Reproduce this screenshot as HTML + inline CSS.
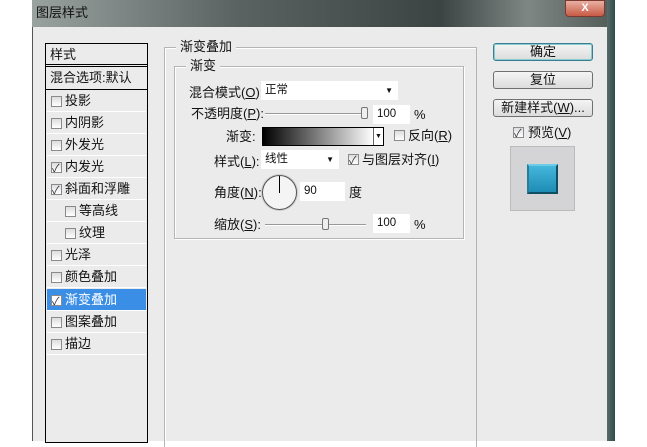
<!DOCTYPE html>
<html><head><meta charset="utf-8"><style>
*{margin:0;padding:0;box-sizing:border-box}
body{width:647px;height:441px;background:#fff;position:relative;overflow:hidden;font-family:"Liberation Sans","Noto Sans CJK SC",sans-serif;font-size:13px;color:#111}
.a{position:absolute}
.t{position:absolute;white-space:nowrap;line-height:14px}
.cb{position:absolute;width:11px;height:11px;border:1px solid #8a8a8a;background:linear-gradient(#ddd,#fff)}
.cb.on::after{content:"✓";position:absolute;left:0px;top:-3px;font-size:11px;color:#334}
.it{position:absolute;left:47px;width:99px;height:22px;border-bottom:1px solid #fff}
.btn{position:absolute;left:493px;width:100px;height:18px;border:1px solid #707070;border-radius:3px;background:linear-gradient(#f4f4f4,#dcdcdc);text-align:center;line-height:16px}
.inp{position:absolute;background:#fff;height:19px;line-height:19px;padding-left:4px;font-size:11.5px}
</style></head><body>
<div class="a" style="left:32px;top:0;width:583px;height:441px;background:#ecebec;border-left:1px solid #555"></div>
<div class="a" style="left:32px;top:0;width:583px;height:27px;background:linear-gradient(90deg,#9aa2a0,#5a6361 35%,#3b4442 70%,#7f8785 85%,#525a58)"></div>
<div class="t" style="left:36px;top:6px;color:#111;font-size:13px">图层样式</div>
<div class="a" style="left:565px;top:0;width:40px;height:17px;border-radius:0 0 4px 4px;background:linear-gradient(#e8b0a4,#c85a44);border:1px solid #7a3a30;color:#fff;text-align:center;font-size:11px;line-height:14px;font-weight:bold">X</div>
<div class="a" style="left:607px;top:0;width:8px;height:441px;background:linear-gradient(90deg,#5b6b6a,#2c4b4c)"></div>
<!-- left list -->
<div class="a" style="left:45px;top:43px;width:103px;height:400px;border:1px solid #000;background:#ecebec"></div>
<div class="a" style="left:45px;top:64px;width:103px;height:3px;border-top:1px solid #000;border-bottom:1px solid #000"></div>
<div class="t" style="left:50px;top:48px">样式</div>
<div class="t" style="left:50px;top:71px">混合选项:默认</div>
<div class="a" style="left:46px;top:89px;width:101px;height:1px;background:#000"></div>
<div class="it" style="top:90px"><div class="cb" style="left:4px;top:6px"></div><div class="t" style="left:18px;top:4px">投影</div></div>
<div class="it" style="top:112px"><div class="cb" style="left:4px;top:6px"></div><div class="t" style="left:18px;top:4px">内阴影</div></div>
<div class="it" style="top:134px"><div class="cb" style="left:4px;top:6px"></div><div class="t" style="left:18px;top:4px">外发光</div></div>
<div class="it" style="top:156px"><div class="cb on" style="left:4px;top:6px"></div><div class="t" style="left:18px;top:4px">内发光</div></div>
<div class="it" style="top:178px"><div class="cb on" style="left:4px;top:6px"></div><div class="t" style="left:18px;top:4px">斜面和浮雕</div></div>
<div class="it" style="top:200px"><div class="cb" style="left:18px;top:6px"></div><div class="t" style="left:32px;top:4px">等高线</div></div>
<div class="it" style="top:222px"><div class="cb" style="left:18px;top:6px"></div><div class="t" style="left:32px;top:4px">纹理</div></div>
<div class="it" style="top:244px"><div class="cb" style="left:4px;top:6px"></div><div class="t" style="left:18px;top:4px">光泽</div></div>
<div class="it" style="top:266px"><div class="cb" style="left:4px;top:6px"></div><div class="t" style="left:18px;top:4px">颜色叠加</div></div>
<div class="it" style="top:289px;background:#3a8ee6;color:#fff"><div class="cb on" style="left:4px;top:6px;background:#fff"></div><div class="t" style="left:18px;top:4px">渐变叠加</div></div>
<div class="it" style="top:311px"><div class="cb" style="left:4px;top:6px"></div><div class="t" style="left:18px;top:4px">图案叠加</div></div>
<div class="it" style="top:333px"><div class="cb" style="left:4px;top:6px"></div><div class="t" style="left:18px;top:4px">描边</div></div>
<!-- fieldsets -->
<div class="a" style="left:164px;top:47px;width:313px;height:400px;border:1px solid #b5b5b5;border-bottom:none;box-shadow:1px 1px 0 #fff inset"></div>
<div class="t" style="left:176px;top:40px;background:#ecebec;padding:0 4px">渐变叠加</div>
<div class="a" style="left:174px;top:66px;width:290px;height:173px;border:1px solid #b5b5b5;box-shadow:1px 1px 0 #fff inset,1px 1px 0 #fff"></div>
<div class="t" style="left:186px;top:59px;background:#ecebec;padding:0 4px">渐变</div>
<div class="t" style="left:189px;top:86px">混合模式(<u>O</u>):</div>
<div class="inp" style="left:261px;top:81px;width:137px">正常<span style="position:absolute;right:5px;top:0;font-size:8px">▼</span></div>
<div class="t" style="left:191px;top:107px">不透明度(<u>P</u>):</div>
<div class="a" style="left:265px;top:113px;width:103px;height:2px;border-top:1px solid #999;border-bottom:1px solid #fff"></div>
<div class="a" style="left:361px;top:107px;width:7px;height:12px;border:1px solid #777;border-radius:2px;background:#eee"></div>
<div class="inp" style="left:373px;top:105px;width:37px">100</div>
<div class="t" style="left:414px;top:108px">%</div>
<div class="t" style="left:226px;top:130px">渐变:</div>
<div class="a" style="left:262px;top:127px;width:122px;height:19px;border:1px solid #000;background:linear-gradient(90deg,#000,#fff 92%)"></div>
<div class="a" style="left:373px;top:128px;width:10px;height:17px;background:#fff;border-left:1px solid #666;font-size:7px;text-align:center;line-height:17px">▼</div>
<div class="cb" style="left:394px;top:130px"></div><div class="t" style="left:408px;top:129px">反向(<u>R</u>)</div>
<div class="t" style="left:214px;top:155px">样式(<u>L</u>):</div>
<div class="inp" style="left:261px;top:150px;width:78px">线性<span style="position:absolute;right:5px;top:0;font-size:8px">▼</span></div>
<div class="cb on" style="left:348px;top:154px"></div><div class="t" style="left:362px;top:153px">与图层对齐(<u>I</u>)</div>
<div class="t" style="left:214px;top:186px">角度(<u>N</u>):</div>
<div class="a" style="left:262px;top:175px;width:35px;height:35px;border-radius:50%;border:1px solid #555;background:#f4f4f4;box-shadow:0 0 0 1px #ccc"></div>
<div class="a" style="left:279px;top:176px;width:1px;height:17px;background:#000"></div>
<div class="inp" style="left:300px;top:182px;width:45px">90</div>
<div class="t" style="left:349px;top:186px">度</div>
<div class="t" style="left:214px;top:218px">缩放(<u>S</u>):</div>
<div class="a" style="left:265px;top:224px;width:101px;height:2px;border-top:1px solid #999;border-bottom:1px solid #fff"></div>
<div class="a" style="left:322px;top:218px;width:7px;height:12px;border:1px solid #777;border-radius:2px;background:#eee"></div>
<div class="inp" style="left:373px;top:214px;width:37px">100</div>
<div class="t" style="left:414px;top:218px">%</div>
<!-- right -->
<div class="btn" style="top:43px;border-color:#3a7f95;box-shadow:0 0 0 1px #8cc inset">确定</div>
<div class="btn" style="top:71px">复位</div>
<div class="btn" style="top:99px">新建样式(<u>W</u>)...</div>
<div class="cb on" style="left:513px;top:127px"></div><div class="t" style="left:528px;top:126px">预览(<u>V</u>)</div>
<div class="a" style="left:510px;top:146px;width:65px;height:65px;background:#d4d4d6;border:1px solid #bbb"></div>
<div class="a" style="left:527px;top:164px;width:31px;height:30px;background:linear-gradient(#45b6dc,#1e8cb4);border:2px solid #0f4e63;border-top-color:#6ccbe6;border-left-color:#2a7d95"></div>
</body></html>
